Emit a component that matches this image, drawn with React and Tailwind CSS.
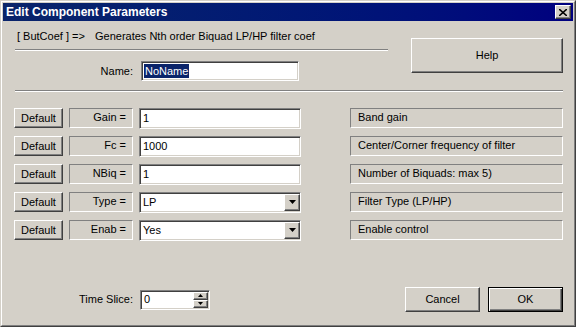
import React from "react";

const raised =
  "bg-[#d4d0c8] border border-t-white border-l-white border-r-[#404040] border-b-[#404040] shadow-[inset_-1px_-1px_0_#808080]";
const sunken =
  "bg-white border border-t-[#808080] border-l-[#808080] border-r-white border-b-white shadow-[inset_1px_1px_0_#404040,inset_-1px_-1px_0_#d4d0c8]";
const etched =
  "border border-t-[#808080] border-l-[#808080] border-r-white border-b-white";

const params = [
  { name: "Gain =", value: "1", desc: "Band gain" },
  { name: "Fc =", value: "1000", desc: "Center/Corner frequency of filter" },
  { name: "NBiq =", value: "1", desc: "Number of Biquads: max 5)" },
  { name: "Type =", value: "LP", desc: "Filter Type (LP/HP)", select: true },
  { name: "Enab =", value: "Yes", desc: "Enable control", select: true },
];

const Arrow = ({ up = false, size = 7 }) => (
  <svg width={size} height={Math.ceil(size / 2)} viewBox="0 0 7 4">
    <polygon points={up ? "3.5,0 7,4 0,4" : "0,0 7,0 3.5,4"} fill="#000" />
  </svg>
);

const ParamRow = ({ p }) => (
  <div className="flex items-center h-[20px]">
    <button className={`${raised} w-[49px] h-[20px] text-[11px] text-black flex items-center justify-center`}>
      Default
    </button>
    <div className={`${etched} ml-[6px] w-[64px] h-[20px] flex items-center justify-end pr-[6px] pb-[2px] text-[11px]`}>
      {p.name}
    </div>
    <div className={`${sunken} ml-[6px] w-[162px] h-[21px] flex items-center text-[11px]`}>
      <span className="pl-[3px] flex-1">{p.value}</span>
      {p.select && (
        <div className={`${raised} w-[16px] h-[17px] flex items-center justify-center`}>
          <Arrow />
        </div>
      )}
    </div>
    <div className={`${etched} ml-[49px] w-[213px] h-[20px] flex items-center pl-[7px] pb-[2px] text-[11px]`}>
      {p.desc}
    </div>
  </div>
);

export default function App() {
  return (
    <div
      className="w-[576px] h-[327px] bg-[#d4d0c8] border border-t-[#d4d0c8] border-l-[#d4d0c8] border-r-[#404040] border-b-[#404040] text-black"
      style={{ fontFamily: '"Liberation Sans", Arial, sans-serif' }}
    >
      <div className="h-full flex flex-col p-[1px] border border-t-white border-l-white border-r-[#808080] border-b-[#808080]">
        {/* title bar */}
        <div className="h-[18px] flex items-center justify-between bg-gradient-to-r from-[#0a246a] to-[#00007f] pl-[3px] pr-[2px]">
          <span className="text-white font-bold text-[12px] leading-none">Edit Component Parameters</span>
          <div className={`${raised} w-[16px] h-[14px] flex items-center justify-center`}>
            <svg width="8" height="7" viewBox="0 0 8 7">
              <path d="M0 0 L8 7 M8 0 L0 7" stroke="#000" strokeWidth="1.6" />
            </svg>
          </div>
        </div>

        {/* top section */}
        <div className="flex items-start">
          <div className="ml-[12px] w-[373px]">
            <div className="pt-[9px] pl-[2px] h-[22px] flex items-center text-[11px]">
              <span className="w-[78px]">[ ButCoef ] =&gt;</span>
              <span>Generates Nth order Biquad LP/HP filter coef</span>
            </div>
            <div className="mt-[6px] h-[2px] border-t border-t-[#808080] border-b border-b-white" />
            <div className="mt-[10px] flex items-center h-[20px]">
              <span className="w-[118px] text-right text-[11px]">Name:</span>
              <div className={`${sunken} ml-[8px] w-[158px] h-[20px] flex items-center text-[11px]`}>
                <span className="ml-[2px] bg-[#0a246a] text-white px-[1px] leading-[14px]">NoName</span>
              </div>
            </div>
          </div>
          <button className={`${raised} ml-[23px] mt-[17px] w-[152px] h-[35px] text-[11px] flex items-center justify-center`}>
            Help
          </button>
        </div>

        <div className="ml-[12px] mt-[9px] w-[548px] h-[2px] border-t border-t-[#808080] border-b border-b-white" />

        {/* params */}
        <div className="ml-[11px] mt-[16px] flex flex-col gap-[8px]">
          {params.map((p) => (
            <ParamRow key={p.name} p={p} />
          ))}
        </div>

        <div className="flex-1" />

        {/* bottom row */}
        <div className="flex items-center h-[25px] mb-[12px]">
          <span className="w-[130px] text-right text-[11px]">Time Slice:</span>
          <div className={`${sunken} ml-[7px] w-[70px] h-[20px] flex items-center text-[11px]`}>
            <span className="pl-[3px] flex-1">0</span>
            <div className="flex flex-col mr-[1px]">
              <div className={`${raised} w-[15px] h-[8px] flex items-center justify-center`}>
                <Arrow up size={5} />
              </div>
              <div className={`${raised} w-[15px] h-[8px] flex items-center justify-center`}>
                <Arrow size={5} />
              </div>
            </div>
          </div>
          <button className={`${raised} ml-auto w-[75px] h-[25px] text-[11px] flex items-center justify-center`}>
            Cancel
          </button>
          <button className="ml-[8px] mr-[10px] w-[75px] h-[25px] border border-black bg-[#d4d0c8] shadow-[inset_1px_1px_0_white,inset_-1px_-1px_0_#404040,inset_-2px_-2px_0_#808080] text-[11px] flex items-center justify-center">
            OK
          </button>
        </div>
      </div>
    </div>
  );
}
